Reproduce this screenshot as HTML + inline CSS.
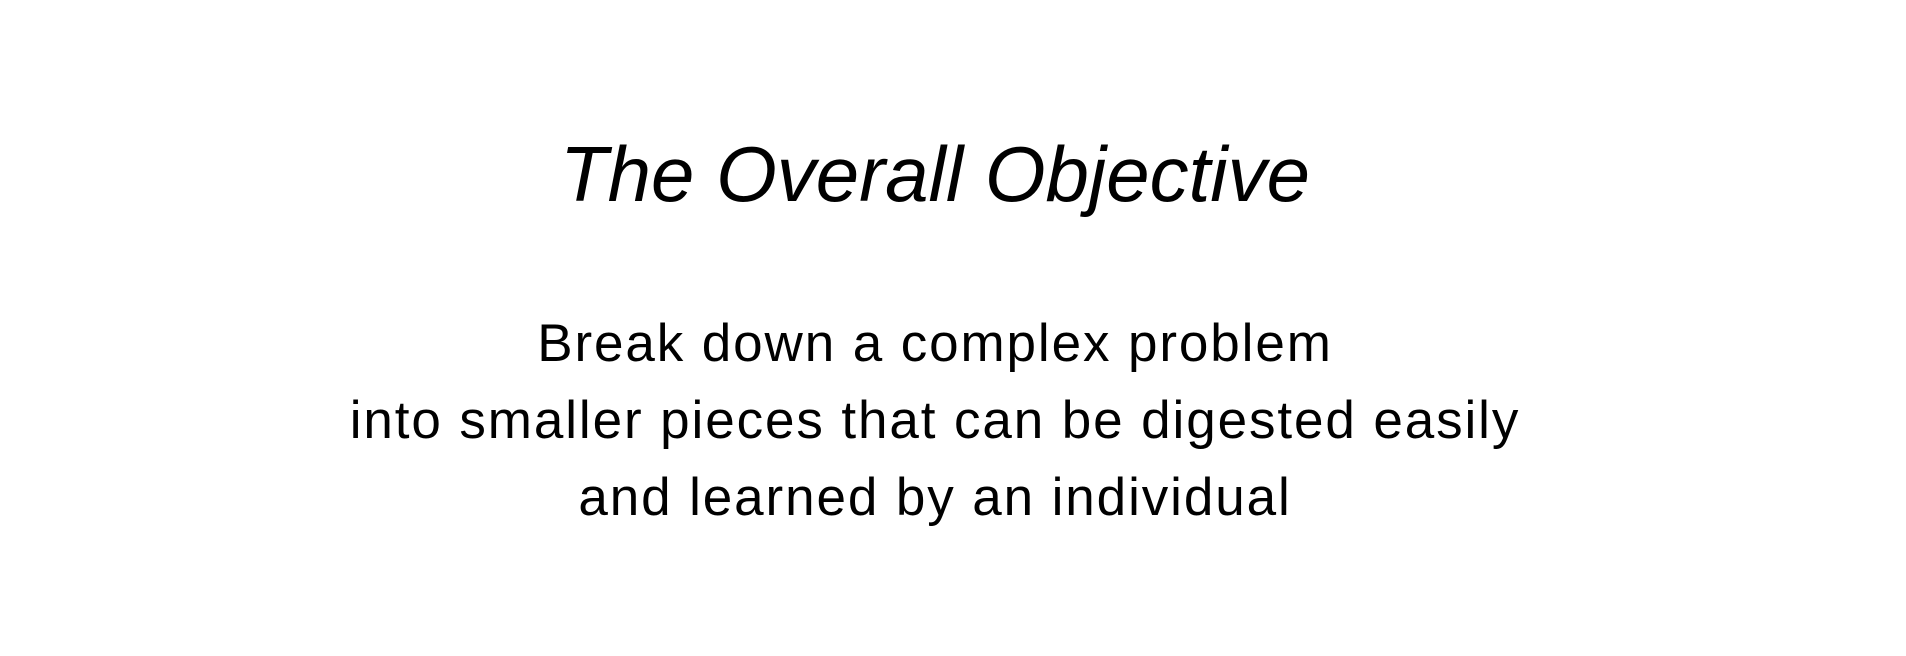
<!DOCTYPE html>
<html><head><meta charset="utf-8"><style>
html,body{margin:0;padding:0;background:#fff;width:1906px;height:656px;overflow:hidden}
.t{position:absolute;left:0;width:1870px;text-align:center;font-family:"Liberation Sans",sans-serif;color:#000;white-space:nowrap}
#title{top:134px;font-size:78px;line-height:80px;font-style:italic}
#body{top:305px;font-size:53px;line-height:77px;letter-spacing:1.9px}
</style></head><body>
<div class="t" id="title">The Overall Objective</div>
<div class="t" id="body">Break down a complex problem<br>into smaller pieces that can be digested easily<br>and learned by an individual</div>
</body></html>
